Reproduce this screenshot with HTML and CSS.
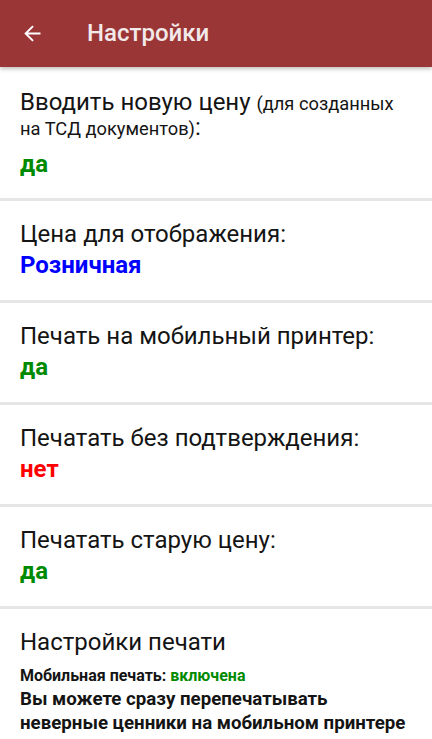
FILE: index.html
```html
<!DOCTYPE html>
<html lang="ru">
<head>
  <meta charset="UTF-8" />
  <title>Настройки</title>
  <link rel="stylesheet" href="styles.css">
</head>
<body>
  <div class="toolbar">
    <svg class="back" width="24" height="24" viewBox="0 0 24 24">
      <path d="M20 12H3.5M11.5 3.5L3 12l8.5 8.5" fill="none" stroke="#fff" stroke-width="2.2"/>
    </svg>
    <span class="title">Настройки</span>
  </div>

  <div class="list">
    <div class="item first">
      <div class="label">Вводить новую цену <span class="hint">(для созданных на ТСД документов)</span>:</div>
      <div class="value yes">да</div>
    </div>
    <div class="item">
      <div class="label">Цена для отображения:</div>
      <div class="value blue">Розничная</div>
    </div>
    <div class="item">
      <div class="label">Печать на мобильный принтер:</div>
      <div class="value yes">да</div>
    </div>
    <div class="item">
      <div class="label">Печатать без подтверждения:</div>
      <div class="value no">нет</div>
    </div>
    <div class="item">
      <div class="label">Печатать старую цену:</div>
      <div class="value yes">да</div>
    </div>
    <div class="item last">
      <div class="label">Настройки печати</div>
      <div class="status">Мобильная печать: <span class="on">включена</span></div>
      <div class="note">Вы можете сразу перепечатывать неверные ценники на мобильном принтере</div>
    </div>
  </div>
</body>
</html>
```

FILE: styles.css
```css
body {
  margin: 0;
  background: #fff;
  font-family: Roboto, 'Noto Sans', sans-serif;
  color: #141414;
  overflow: hidden;
}
.toolbar {
  height: 67px;
  background-color: #9b3637;
  display: flex;
  align-items: center;
  box-shadow: 0 2px 4px rgba(0,0,0,0.25);
  position: relative;
}
.back {
  width: 21px;
  height: 21px;
  margin-left: 23px;
  margin-right: 43px;
}
.title {
  color: #f2eaea;
  font-size: 24px;
  font-weight: 500;
  padding-bottom: 1px;
}
.item {
  padding: 18px 20px 19px;
  border-bottom: 3px solid #e6e6e6;
}
.item.first {
  padding-top: 24px;
  padding-bottom: 18px;
}
.item.first .label {
  line-height: 22.6px;
}
.item.first .value {
  margin-top: 9px;
}
.item.last {
  border-bottom: none;
}
.label {
  font-size: 24px;
  line-height: 31px;
}
.hint {
  font-size: 18.3px;
}
.value {
  font-size: 24px;
  font-weight: bold;
  line-height: 31px;
}
.yes { color: #008a00; }
.blue { color: #0000ff; }
.no { color: #ff0000; }
.status {
  font-size: 16px;
  font-weight: bold;
  line-height: 20px;
  margin-top: 8px;
}
.on { color: #008a00; }
.note {
  font-size: 18.7px;
  font-weight: bold;
  line-height: 24px;
  margin-top: 1px;
}
```
